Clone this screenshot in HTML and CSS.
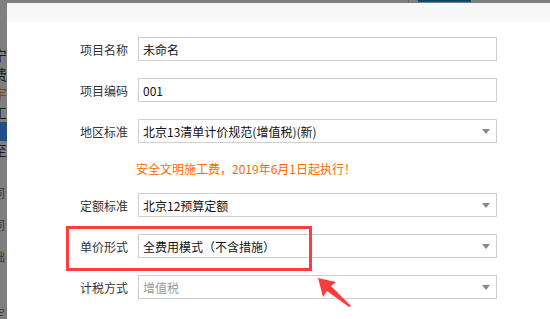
FILE: index.html
```html
<!DOCTYPE html>
<html lang="zh-CN">
<head>
    <meta charset="UTF-8">
    <meta name="viewport" content="width=device-width, initial-scale=1.0">
    <title>新建项目</title>
    <link rel="stylesheet" href="styles.css">
</head>
<body>
    <div id="backdrop">
        <div class="topbar"><span class="tab-line"></span><span class="tab-active"></span></div>
        <div class="main">
            <div class="side">
                <span class="s1">宁</span>
                <span>费</span>
                <span class="orange">宇</span>
                <span>工</span>
                <span class="active">建</span>
                <span>至</span>
                <span class="gap">同</span>
                <span class="gap2">同</span>
                <span class="gap2">础</span>
                <span class="gap3">定</span>
            </div>
            <div id="dialog">
                <div class="dialog-head"></div>
                <form id="projectform">
                    <div class="row">
                        <label for="pname">项目名称</label>
                        <input type="text" id="pname" value="未命名">
                    </div>
                    <div class="row">
                        <label for="pcode">项目编码</label>
                        <input type="text" id="pcode" value="001">
                    </div>
                    <div class="row">
                        <label>地区标准</label>
                        <div class="select"><span>北京13清单计价规范(增值税)(新)</span><i class="caret"></i></div>
                    </div>
                    <div class="notice">安全文明施工费，2019年6月1日起执行！</div>
                    <div class="row">
                        <label>定额标准</label>
                        <div class="select"><span>北京12预算定额</span><i class="caret"></i></div>
                    </div>
                    <div class="row">
                        <label>单价形式</label>
                        <div class="select"><span>全费用模式（不含措施）</span><i class="caret"></i></div>
                    </div>
                    <div class="row">
                        <label>计税方式</label>
                        <div class="select disabled"><span>增值税</span><i class="caret"></i></div>
                    </div>
                </form>
                <div class="mark-box"></div>
                <svg class="mark-arrow" width="40" height="32" viewBox="0 0 40 32">
                    <polygon points="1,1 19,5 14,9 34,29 32,30 10,14 6,20" fill="#ff3b3b"/>
                </svg>
            </div>
        </div>
    </div>
</body>
</html>
```

FILE: styles.css
```css
body {
    margin: 0;
    background-color: #7f7f7f;
    font-family: "Noto Sans CJK SC", "Noto Sans", sans-serif;
    font-size: 12px;
    overflow: hidden;
}
#backdrop {
    height: 319px;
    display: flex;
    flex-direction: column;
}
.topbar {
    height: 3px;
    display: flex;
    flex-shrink: 0;
}
.tab-line {
    margin-left: 408px;
    width: 1px;
    background: #6a6a6a;
}
.tab-active {
    margin-left: 9px;
    width: 53px;
    height: 2px;
    background: #0b4a69;
}
.main {
    flex: 1;
    display: flex;
}
.side {
    width: 7px;
    flex-shrink: 0;
    overflow: hidden;
    display: flex;
    flex-direction: column;
    align-items: flex-end;
    color: #1c1c1c;
    font-size: 14px;
    line-height: 19px;
}
.side span {
    display: block;
    flex-shrink: 0;
    width: 14px;
    text-align: left;
}
.side .s1 {
    margin-top: 43px;
}
.side .orange {
    color: #7a4a14;
}
.side .active {
    background: #1f4f86;
    color: #0e1e38;
    width: 21px;
}
.side .gap {
    margin-top: 23px;
    color: #3a3a3a;
    font-size: 12px;
}
.side .gap2 {
    margin-top: 13px;
    color: #3a3a3a;
    font-size: 12px;
}
.side .gap3 {
    margin-top: 38px;
    color: #3a3a3a;
    font-size: 12px;
}
#dialog {
    flex: 1;
    background: #ffffff;
    position: relative;
}
.dialog-head {
    height: 19px;
    background: #f7f7f7;
}
#projectform {
    padding-top: 15px;
}
.row {
    display: flex;
    align-items: center;
    height: 24px;
    margin-bottom: 17px;
}
.row label {
    width: 121px;
    margin-right: 10px;
    text-align: right;
    color: #333;
}
.row input,
.select {
    box-sizing: border-box;
    width: 359px;
    height: 24px;
    border: 1px solid #cfcfcf;
    padding: 0 4px;
    font-family: inherit;
    font-size: 12px;
    color: #111;
    background: #fff;
    outline: none;
}
.select {
    display: flex;
    align-items: center;
    justify-content: space-between;
    padding-right: 6px;
}
.select.disabled {
    color: #999;
}
.caret {
    width: 0;
    height: 0;
    border-left: 4px solid transparent;
    border-right: 4px solid transparent;
    border-top: 5px solid #888;
}
.notice {
    margin: 0 0 15px 129px;
    height: 18px;
    line-height: 18px;
    color: #ff6a00;
}
.mark-box {
    position: absolute;
    left: 59px;
    top: 223px;
    width: 240px;
    height: 39px;
    border: 3px solid #ff3b3b;
}
.mark-arrow {
    position: absolute;
    left: 310px;
    top: 274px;
}
```
